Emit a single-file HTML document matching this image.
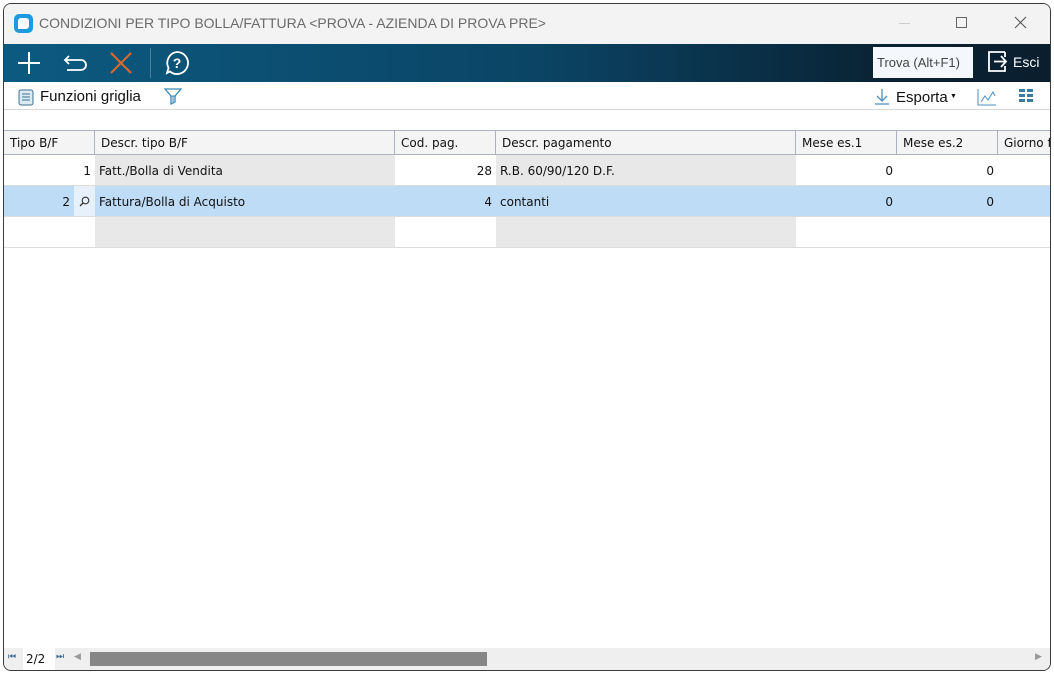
<!DOCTYPE html>
<html><head><meta charset="utf-8"><style>
*{box-sizing:border-box;margin:0;padding:0}
body{width:1054px;height:673px;background:#fff;position:relative;overflow:hidden;font-family:"DejaVu Sans","Liberation Sans",sans-serif;font-size:12px;color:#111}
.win{position:absolute;left:3px;top:3px;width:1048px;height:668px;border:1px solid #3a3a3a;border-radius:8px;overflow:hidden;background:#fff}
.title{position:absolute;left:0;top:0;width:100%;height:40px;background:#f3f3f3}
.title span{position:absolute;left:35px;top:11px;font-family:"Liberation Sans",sans-serif;font-size:14px;color:#6a6a6a}
.logo{position:absolute;left:10px;top:10px;width:19px;height:19px;background:#1e9be0;border-radius:5px}
.logo:after{content:"";position:absolute;left:4px;top:4px;width:11px;height:11px;background:#fff;border-radius:3px 3px 3px 0}
.tb{position:absolute;left:0;top:40px;width:100%;height:38px;background:linear-gradient(90deg,#0c5a80 0%,#0b4566 50%,#0a2233 85%,#0a1e2e 100%)}
.t2{position:absolute;left:0;top:78px;width:100%;height:28px;background:#fff;border-bottom:1px solid #d8d8d8;font-family:"Liberation Sans",sans-serif;font-size:15px}
.grid{position:absolute;left:0;top:126px;width:100%}
.row{position:absolute;left:0;width:100%;height:31px;border-bottom:1px solid #dcdcdc}
.c{position:absolute;top:0;height:100%;line-height:32px;padding:0 4px;white-space:nowrap;overflow:hidden}
.hd{position:absolute;left:0;top:126px;width:100%;height:25px;background:#f4f4f4;border-top:1px solid #aab4c0;border-bottom:1px solid #aab4c0}
.hd .c{line-height:24px;border-right:1px solid #aab4c0;padding-left:6px}
.r{text-align:right}
.sb{position:absolute;left:0;bottom:0;width:100%;height:22px;background:#efefef}
</style></head><body>
<div class="win">
<div class="title"><div class="logo"></div><span>CONDIZIONI PER TIPO BOLLA/FATTURA &lt;PROVA - AZIENDA DI PROVA PRE&gt;</span>
<div style="position:absolute;left:895px;top:19px;width:11px;border-top:1px solid #ccc"></div>
<div style="position:absolute;left:952px;top:13px;width:11px;height:11px;border:1px solid #666"></div>
<svg style="position:absolute;left:1010px;top:12px" width="13" height="13"><path d="M1 1L12 12M12 1L1 12" stroke="#555" stroke-width="1.1"/></svg>
</div>
<div class="tb">
<svg style="position:absolute;left:14px;top:8px" width="22" height="22"><path d="M11 0V22M0 11H22" stroke="#fff" stroke-width="2"/></svg>
<svg style="position:absolute;left:59px;top:9px" width="26" height="20"><path d="M6 3L2 7L6 11M2 7H18a5 5 0 0 1 0 10H4" stroke="#fff" stroke-width="1.8" fill="none"/></svg>
<svg style="position:absolute;left:106px;top:8px" width="22" height="22"><path d="M1 1L21 21M21 1L1 21" stroke="#e06a2a" stroke-width="2"/></svg>
<div style="position:absolute;left:146px;top:4px;height:30px;border-left:1px solid #4b7d99"></div>
<svg style="position:absolute;left:160px;top:6px" width="26" height="26"><path d="M13 2a11 11 0 1 1 -7 19.5L3 23L4.5 18A11 11 0 0 1 13 2z" stroke="#fff" stroke-width="1.8" fill="none"/><text x="13" y="18" text-anchor="middle" font-family="Liberation Sans" font-weight="bold" font-size="14" fill="#fff">?</text></svg>
<div style="position:absolute;left:869px;top:3px;width:100px;height:31px;background:#f4f8fc;font-family:'Liberation Sans',sans-serif;font-size:13px;color:#444;line-height:31px;padding-left:4px">Trova (Alt+F1)</div>
<svg style="position:absolute;left:982px;top:6px" width="24" height="24"><path d="M8 11.5H20M15 6L20 11.5L15 17" stroke="#fff" stroke-width="1.8" fill="none"/><path d="M19 2H3V21H19V16M19 2V7" stroke="#fff" stroke-width="1.8" fill="none"/></svg>
<span style="position:absolute;left:1009px;top:10px;color:#fff;font-family:'Liberation Sans',sans-serif;font-size:14px">Esci</span>
</div>
<div class="t2">
<svg style="position:absolute;left:14px;top:7px" width="17" height="17"><rect x="1" y="1" width="14" height="15" rx="2" fill="#dceaf4" stroke="#3d6f90"/><path d="M4 5H12M4 8H12M4 11H12" stroke="#3d6f90"/></svg>
<span style="position:absolute;left:36px;top:6px">Funzioni griglia</span>
<svg style="position:absolute;left:160px;top:5px" width="18" height="20"><path d="M1 2H17L11 9V15L7 17V9Z" fill="none" stroke="#3a8ab8" stroke-width="1.3"/><path d="M6 9H12M9 9V15" stroke="#3a8ab8"/></svg>
<svg style="position:absolute;left:870px;top:6px" width="16" height="18"><path d="M8 1V13M3 8L8 13L13 8M1 16H15" stroke="#4a90c0" stroke-width="1.3" fill="none"/></svg>
<span style="position:absolute;left:892px;top:7px">Esporta</span><span style="position:absolute;left:946px;top:11px;font-size:7px">▼</span>
<svg style="position:absolute;left:973px;top:6px" width="20" height="18"><path d="M1 1V17H19" stroke="#4a90c0" fill="none"/><path d="M4 14L8 8L11 12L16 4L18 8" stroke="#4a90c0" fill="none"/></svg>
<svg style="position:absolute;left:1015px;top:7px" width="14" height="14"><rect x="0" y="0" width="6" height="3" fill="#3d7aa0"/><rect x="8" y="0" width="6" height="3" fill="#3d7aa0"/><rect x="0" y="5" width="6" height="3" fill="#3d7aa0"/><rect x="8" y="5" width="6" height="3" fill="#3d7aa0"/><rect x="0" y="10" width="6" height="3" fill="#3d7aa0"/><rect x="8" y="10" width="6" height="3" fill="#3d7aa0"/></svg>
</div>
<div class="hd">
<div class="c" style="left:0;width:91px">Tipo B/F</div>
<div class="c" style="left:91px;width:300px">Descr. tipo B/F</div>
<div class="c" style="left:391px;width:101px">Cod. pag.</div>
<div class="c" style="left:492px;width:300px">Descr. pagamento</div>
<div class="c" style="left:792px;width:101px">Mese es.1</div>
<div class="c" style="left:893px;width:101px">Mese es.2</div>
<div class="c" style="left:994px;width:60px;border:none">Giorno f</div>
</div>
<div class="row" style="top:151px">
<div class="c r" style="left:0;width:91px">1</div>
<div class="c" style="left:91px;width:300px;background:#e8e8e8">Fatt./Bolla di Vendita</div>
<div class="c r" style="left:391px;width:101px">28</div>
<div class="c" style="left:492px;width:300px;background:#e8e8e8">R.B. 60/90/120 D.F.</div>
<div class="c r" style="left:792px;width:101px">0</div>
<div class="c r" style="left:893px;width:101px">0</div>
</div>
<div class="row" style="top:182px;background:#bfdcf6">
<div class="c r" style="left:0;width:70px">2</div>
<div class="c" style="left:70px;width:21px;background:#e6f1fb;padding:0">
<svg style="position:absolute;left:5px;top:10px" width="11" height="11"><circle cx="6.5" cy="4.5" r="3.3" stroke="#333" fill="none" stroke-width="1.1"/><path d="M4 7L1 10" stroke="#333" stroke-width="1.3"/></svg></div>
<div class="c" style="left:91px;width:300px">Fattura/Bolla di Acquisto</div>
<div class="c r" style="left:391px;width:101px">4</div>
<div class="c" style="left:492px;width:300px">contanti</div>
<div class="c r" style="left:792px;width:101px">0</div>
<div class="c r" style="left:893px;width:101px">0</div>
</div>
<div class="row" style="top:213px">
<div class="c" style="left:91px;width:300px;background:#e8e8e8"></div>
<div class="c" style="left:492px;width:300px;background:#e8e8e8"></div>
</div>
<div class="sb">
<span style="position:absolute;left:4px;top:4px;font-size:9px;color:#3a6a9a">⏮</span>
<span style="position:absolute;left:19px;top:0;width:32px;height:22px;background:#fff;line-height:22px;padding-left:3px">2/2</span>
<span style="position:absolute;left:52px;top:4px;font-size:9px;color:#3a6a9a">⏭</span>
<span style="position:absolute;left:70px;top:4px;font-size:9px;color:#999">◀</span>
<div style="position:absolute;left:86px;top:4px;width:397px;height:14px;background:#868686"></div>
<span style="position:absolute;left:1031px;top:4px;font-size:9px;color:#999">▶</span>
</div>
</div>
</body></html>
